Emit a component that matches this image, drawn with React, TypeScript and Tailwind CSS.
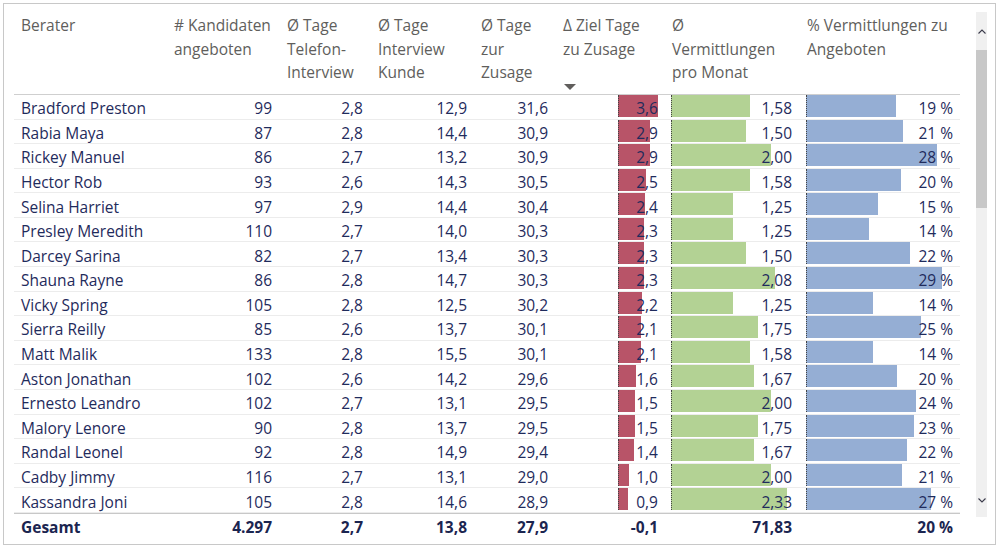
import React from 'react';

type Row = {
  name: string;
  kand: string;
  tel: string;
  kunde: string;
  zusage: string;
  delta: number;
  verm: number;
  pct: number;
  pctBar: number;
};

const rows: Row[] = [
  { name: 'Bradford Preston', kand: '99', tel: '2,8', kunde: '12,9', zusage: '31,6', delta: 3.6, verm: 1.58, pct: 19, pctBar: 90 },
  { name: 'Rabia Maya', kand: '87', tel: '2,8', kunde: '14,4', zusage: '30,9', delta: 2.9, verm: 1.5, pct: 21, pctBar: 97 },
  { name: 'Rickey Manuel', kand: '86', tel: '2,7', kunde: '13,2', zusage: '30,9', delta: 2.9, verm: 2.0, pct: 28, pctBar: 131 },
  { name: 'Hector Rob', kand: '93', tel: '2,6', kunde: '14,3', zusage: '30,5', delta: 2.5, verm: 1.58, pct: 20, pctBar: 95 },
  { name: 'Selina Harriet', kand: '97', tel: '2,9', kunde: '14,4', zusage: '30,4', delta: 2.4, verm: 1.25, pct: 15, pctBar: 72 },
  { name: 'Presley Meredith', kand: '110', tel: '2,7', kunde: '14,0', zusage: '30,3', delta: 2.3, verm: 1.25, pct: 14, pctBar: 63 },
  { name: 'Darcey Sarina', kand: '82', tel: '2,7', kunde: '13,4', zusage: '30,3', delta: 2.3, verm: 1.5, pct: 22, pctBar: 104 },
  { name: 'Shauna Rayne', kand: '86', tel: '2,8', kunde: '14,7', zusage: '30,3', delta: 2.3, verm: 2.08, pct: 29, pctBar: 136 },
  { name: 'Vicky Spring', kand: '105', tel: '2,8', kunde: '12,5', zusage: '30,2', delta: 2.2, verm: 1.25, pct: 14, pctBar: 67 },
  { name: 'Sierra Reilly', kand: '85', tel: '2,6', kunde: '13,7', zusage: '30,1', delta: 2.1, verm: 1.75, pct: 25, pctBar: 115 },
  { name: 'Matt Malik', kand: '133', tel: '2,8', kunde: '15,5', zusage: '30,1', delta: 2.1, verm: 1.58, pct: 14, pctBar: 67 },
  { name: 'Aston Jonathan', kand: '102', tel: '2,6', kunde: '14,2', zusage: '29,6', delta: 1.6, verm: 1.67, pct: 20, pctBar: 91 },
  { name: 'Ernesto Leandro', kand: '102', tel: '2,7', kunde: '13,1', zusage: '29,5', delta: 1.5, verm: 2.0, pct: 24, pctBar: 110 },
  { name: 'Malory Lenore', kand: '90', tel: '2,8', kunde: '13,7', zusage: '29,5', delta: 1.5, verm: 1.75, pct: 23, pctBar: 108 },
  { name: 'Randal Leonel', kand: '92', tel: '2,8', kunde: '14,9', zusage: '29,4', delta: 1.4, verm: 1.67, pct: 22, pctBar: 101 },
  { name: 'Cadby Jimmy', kand: '116', tel: '2,7', kunde: '13,1', zusage: '29,0', delta: 1.0, verm: 2.0, pct: 21, pctBar: 96 },
  { name: 'Kassandra Joni', kand: '105', tel: '2,8', kunde: '14,6', zusage: '28,9', delta: 0.9, verm: 2.33, pct: 27, pctBar: 125 },
];

const cols = 'grid grid-cols-[153px_113px_91px_103px_82px_109px_135px_160px]';
const num = 'flex items-center justify-end pt-[4px]';
const fmt = (v: number, d: number) => v.toFixed(d).replace('.', ',');

const Chevron = ({ down }: { down?: boolean }) => (
  <svg width="8" height="5" viewBox="0 0 8 5" className="block">
    <path
      d={down ? 'M0.5 0.5 L4 4 L7.5 0.5' : 'M0.5 4.5 L4 1 L7.5 4.5'}
      fill="none"
      stroke="#3a3a4a"
      strokeWidth="1.1"
    />
  </svg>
);

export default function App() {
  return (
    <div className="w-[1000px] h-[548px] bg-white pt-[3px] pl-[3px] font-['Open_Sans',sans-serif] text-[15.5px]">
      <div className="w-[993px] h-[542px] border border-[#c8c8c8] flex">
        <div className="w-[946px] ml-[10px] flex flex-col">
          {/* header */}
          <div className={`${cols} h-[91px] pt-[10px] border-b border-[#cfcfcf] text-[#605e5c] leading-[23.5px] whitespace-nowrap`}>
            <div className="pl-[7px]">Berater</div>
            <div className="pl-[7px]">
              # Kandidaten
              <br />
              angeboten
            </div>
            <div className="pl-[7px]">
              Ø Tage
              <br />
              Telefon-
              <br />
              Interview
            </div>
            <div className="pl-[7px]">
              Ø Tage
              <br />
              Interview
              <br />
              Kunde
            </div>
            <div className="pl-[7px]">
              Ø Tage
              <br />
              zur
              <br />
              Zusage
            </div>
            <div className="pl-[7px] flex flex-col">
              <span>Δ Ziel Tage</span>
              <span>zu Zusage</span>
              <svg width="12" height="7" viewBox="0 0 12 7" className="mt-[23px] ml-[1px]">
                <path d="M0 0 L12 0 L6 6 Z" fill="#605e5c" />
              </svg>
            </div>
            <div className="pl-[7px]">
              Ø
              <br />
              Vermittlungen
              <br />
              pro Monat
            </div>
            <div className="pl-[7px]">
              % Vermittlungen zu
              <br />
              Angeboten
            </div>
          </div>

          {/* body */}
          <div className="h-[418px] overflow-hidden text-[#1f2b5c] leading-[13px]">
            {rows.map((r) => (
              <div key={r.name} className={`${cols} h-[24.58px] border-b border-[#ececec]`}>
                <div className="pl-[7px] pt-[4px] whitespace-nowrap flex items-center">{r.name}</div>
                <div className={`${num} pr-[8px]`}>{r.kand}</div>
                <div className={`${num} pr-[8px]`}>{r.tel}</div>
                <div className={`${num} pr-[7px]`}>{r.kunde}</div>
                <div className={`${num} pr-[8px]`}>{r.zusage}</div>
                <div className={`${num} relative pr-[7px]`}>
                  <div
                    className="absolute left-[62px] top-0 h-[22px] bg-[#b85468] border-l border-dotted border-[#444]"
                    style={{ width: r.delta * 11.1 }}
                  />
                  <span className="relative">{fmt(r.delta, 1)}</span>
                </div>
                <div className={`${num} relative pr-[8px]`}>
                  <div
                    className="absolute left-[6px] top-0 h-[22px] bg-[#b3d294] border-l border-dotted border-[#444]"
                    style={{ width: r.verm * 49.8 }}
                  />
                  <span className="relative">{fmt(r.verm, 2)}</span>
                </div>
                <div className={`${num} relative pr-[7px]`}>
                  <div
                    className="absolute left-[6px] top-0 h-[22px] bg-[#95aed4] border-l border-dotted border-[#444]"
                    style={{ width: r.pctBar }}
                  />
                  <span className="relative">{r.pct} %</span>
                </div>
              </div>
            ))}
          </div>

          {/* total */}
          <div className={`${cols} h-[27px] pt-[1px] border-t border-[#c8c8c8] font-bold text-[#1b2550] leading-[25px]`}>
            <div className="pl-[7px]">Gesamt</div>
            <div className="text-right pr-[8px]">4.297</div>
            <div className="text-right pr-[8px]">2,7</div>
            <div className="text-right pr-[7px]">13,8</div>
            <div className="text-right pr-[8px]">27,9</div>
            <div className="text-right pr-[7px]">-0,1</div>
            <div className="text-right pr-[8px]">71,83</div>
            <div className="text-right pr-[7px]">20 %</div>
          </div>
        </div>

        {/* scrollbar */}
        <div className="ml-[16px] mt-[8px] w-[11px] h-[505px] bg-[#f0f0f0] flex flex-col">
          <div className="h-[38px] flex items-center justify-center">
            <Chevron />
          </div>
          <div className="h-[158px] bg-[#c8c8c8]" />
          <div className="flex-1" />
          <div className="h-[22px] flex items-start justify-center pt-[3px]">
            <Chevron down />
          </div>
        </div>
      </div>
    </div>
  );
}
